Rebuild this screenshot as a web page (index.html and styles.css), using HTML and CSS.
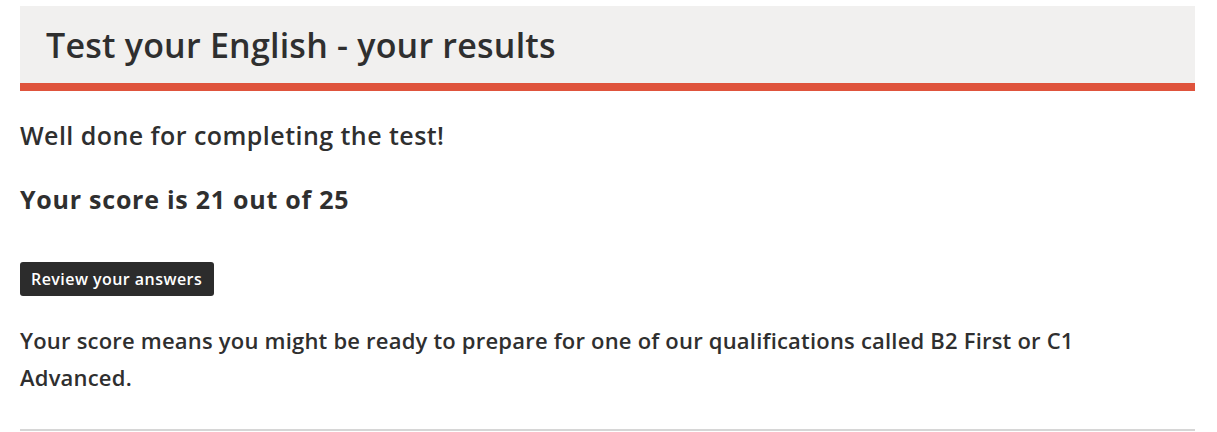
FILE: index.html
```html
<!DOCTYPE html>
<html lang="en">
<head>
<meta charset="utf-8">
<title>Test your English - your results</title>
<link rel="stylesheet" href="styles.css">
</head>
<body>
<main class="results">
  <header class="results-header">
    <h1 class="results-title">Test your English - your results</h1>
  </header>
  <p class="lead">Well done for completing the test!</p>
  <h2 class="score">Your score is 21 out of 25</h2>
  <button class="review-btn" type="button">Review your answers</button>
  <p class="advice">Your score means you might be ready to prepare for one of our qualifications called B2 First or C1 Advanced.</p>
  <hr class="divider">
</main>
</body>
</html>
```

FILE: styles.css
```css
html, body {
  margin: 0;
  padding: 0;
  background: #ffffff;
}

body {
  font-family: "Open Sans", "Liberation Sans", sans-serif;
  color: #2f2f2f;
}

.results {
  margin: 6px 22px 0 20px;
}

.results-header {
  height: 77px;
  display: flex;
  align-items: center;
  padding: 0 26px;
  background: #f1f0ef;
  border-bottom: 8px solid #df533c;
}

.results-title {
  margin: 0;
  font-size: 34px;
  font-weight: 600;
  line-height: 40px;
  letter-spacing: 0.22px;
  color: #2f2f2f;
}

.lead {
  margin: 29px 0 0;
  font-size: 25px;
  font-weight: 600;
  line-height: 30px;
  letter-spacing: 0.45px;
}

.score {
  margin: 34px 0 0;
  font-size: 25px;
  font-weight: 700;
  line-height: 30px;
  letter-spacing: 0.75px;
}

.review-btn {
  display: block;
  margin: 48px 0 0;
  height: 34px;
  padding: 0 12px 0 11px;
  border: 0;
  border-radius: 3px;
  background: #2c2c2c;
  color: #ffffff;
  font-family: inherit;
  font-size: 16px;
  font-weight: 600;
  line-height: 34px;
  letter-spacing: 0.45px;
}

.advice {
  max-width: 1140px;
  margin: 26px 0 0;
  font-size: 22px;
  font-weight: 600;
  line-height: 37.4px;
  letter-spacing: 0.2px;
}

.divider {
  margin: 32px 0 0;
  border: 0;
  border-top: 2px solid #d6d6d6;
  height: 0;
}
```
